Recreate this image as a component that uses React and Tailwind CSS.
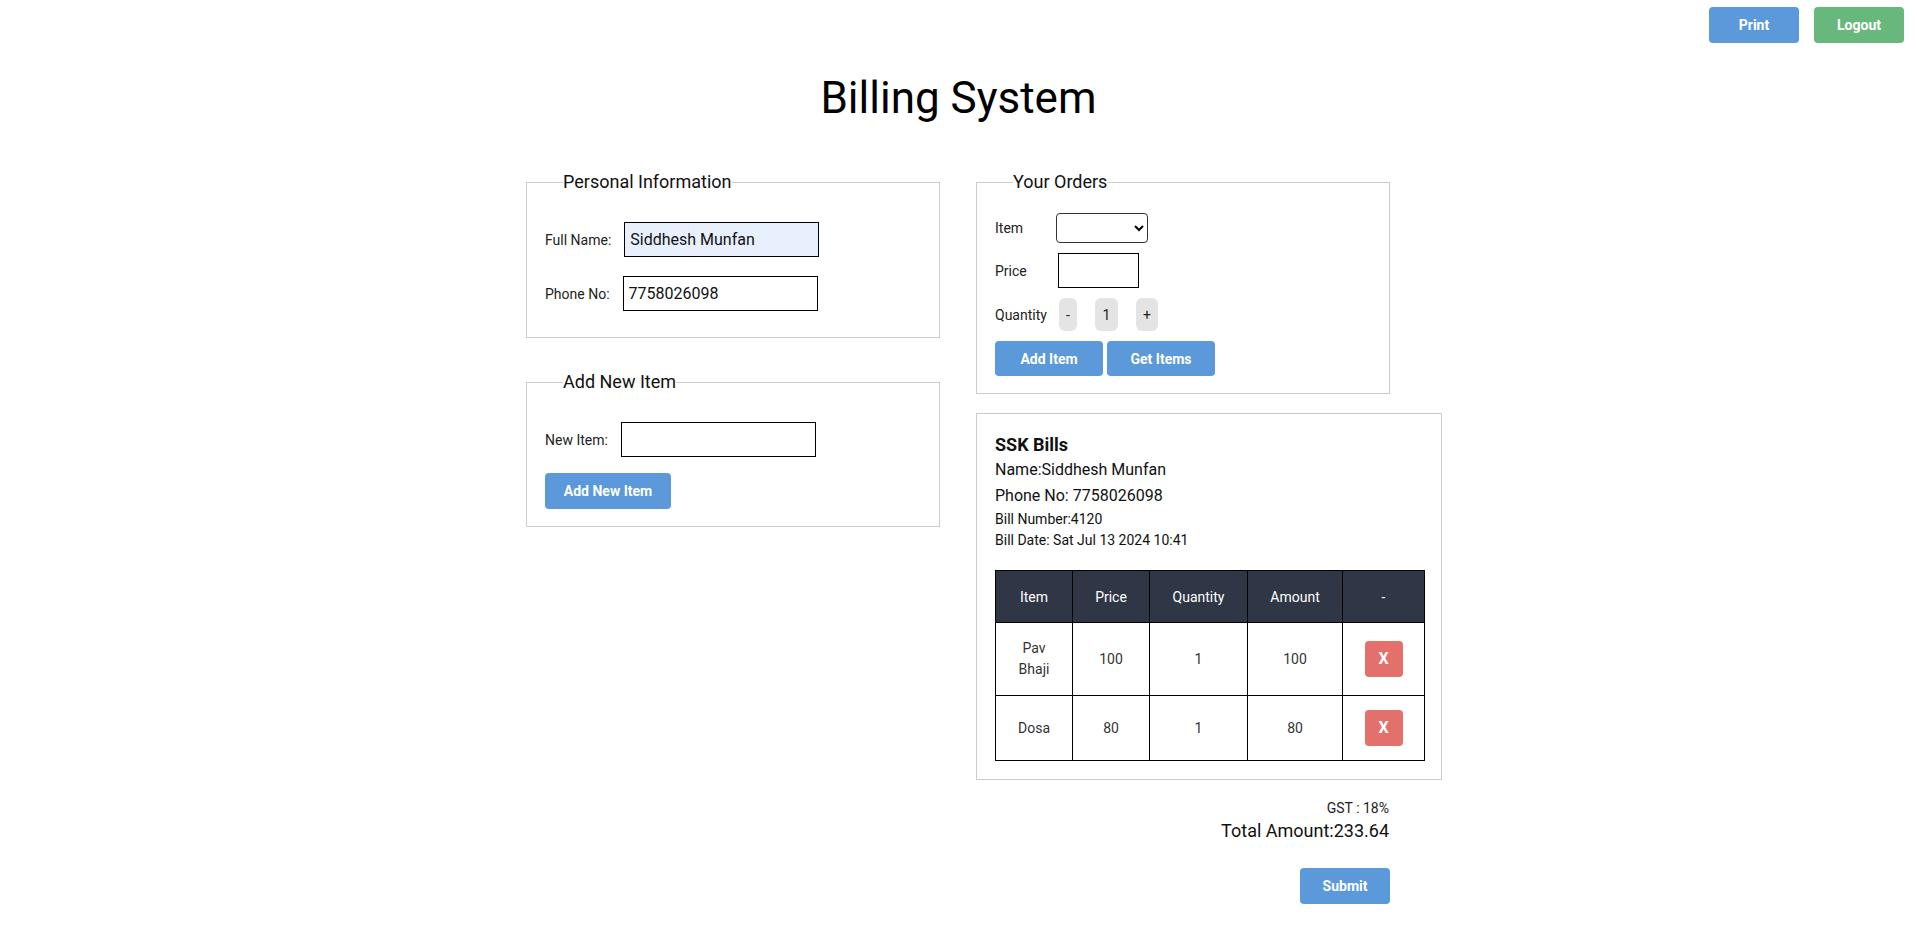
import React from "react";

const rows = [
  { item: "Pav Bhaji", price: 100, qty: 1, amount: 100 },
  { item: "Dosa", price: 80, qty: 1, amount: 80 },
];

function Fieldset({ title, className = "", children }) {
  return (
    <fieldset className={`border border-[#cccccc] px-[18px] ${className}`}>
      <legend className="ml-[18px] p-0 text-[18px] leading-[22px] text-[#111]">{title}</legend>
      {children}
    </fieldset>
  );
}

function TextField({ label, value, autofill }) {
  return (
    <div className="flex items-center gap-[13px]">
      <label className="text-sm text-[#222]">{label}</label>
      <input
        type="text"
        defaultValue={value}
        className={`h-[35px] w-[195px] border border-black px-[5px] text-base text-[#111] outline-none ${
          autofill ? "bg-[#e8f0fe]" : "bg-white"
        }`}
      />
    </div>
  );
}

export default function App() {
  return (
    <div className="min-h-screen bg-white font-['Roboto','Liberation_Sans',sans-serif] text-black">
      <div className="flex justify-end gap-[15px] pr-[13px] pt-[7px]">
        <button className="h-[36px] w-[90px] rounded-[4px] bg-[#5b99db] text-sm font-bold text-white">Print</button>
        <button className="h-[36px] w-[90px] rounded-[4px] bg-[#68b77d] text-sm font-bold text-white">Logout</button>
      </div>

      <h1 className="mt-[29px] text-center text-[44px] font-normal leading-[52px]">Billing System</h1>

      <div className="mt-[47px] flex justify-center gap-[36px] pr-px">
        {/* left column */}
        <div className="flex w-[414px] flex-col">
          <Fieldset title="Personal Information" className="pb-[26px] pt-[29px]">
            <div className="flex flex-col gap-[19px]">
              <TextField label="Full Name:" value="Siddhesh Munfan" autofill />
              <TextField label="Phone No:" value="7758026098" />
            </div>
          </Fieldset>

          <Fieldset title="Add New Item" className="mt-[33px] pb-[17px] pt-[29px]">
            <TextField label="New Item:" value="" />
            <button className="mt-[16px] h-[36px] w-[126px] rounded-[4px] bg-[#5b99db] text-sm font-bold text-white">
              Add New Item
            </button>
          </Fieldset>
        </div>

        {/* right column */}
        <div className="flex w-[414px] flex-col">
          <Fieldset title="Your Orders" className="pb-[17px] pt-[20px]">
            <div className="flex flex-col gap-[10px]">
              <div className="flex items-center">
                <label className="w-[61px] text-sm text-[#222]">Item</label>
                <select className="h-[30px] w-[92px] rounded-[4px] border border-[#333] bg-white text-sm">
                  <option value=""></option>
                  <option>Pav Bhaji</option>
                  <option>Dosa</option>
                </select>
              </div>
              <div className="flex items-center">
                <label className="w-[63px] text-sm text-[#222]">Price</label>
                <input type="text" className="h-[35px] w-[81px] border border-black bg-white px-[5px] outline-none" />
              </div>
              <div className="flex items-center">
                <label className="w-[64px] text-sm text-[#222]">Quantity</label>
                <div className="flex items-center gap-[18px]">
                  <button className="h-[33px] w-[18px] rounded-[6px] bg-[#e4e4e4] text-sm text-[#222]">-</button>
                  <span className="flex h-[33px] w-[23px] items-center justify-center rounded-[6px] bg-[#e4e4e4] text-sm text-[#222]">
                    1
                  </span>
                  <button className="h-[33px] w-[22px] rounded-[6px] bg-[#e4e4e4] text-sm text-[#222]">+</button>
                </div>
              </div>
              <div className="flex gap-[4px]">
                <button className="h-[35px] w-[108px] rounded-[4px] bg-[#5b99db] text-sm font-bold text-white">Add Item</button>
                <button className="h-[35px] w-[108px] rounded-[4px] bg-[#5b99db] text-sm font-bold text-white">Get Items</button>
              </div>
            </div>
          </Fieldset>

          <div className="mt-[19px] w-[466px] border border-[#cccccc] p-[18px]">
            <h3 className="text-[18px] font-bold leading-[25px] text-[#111]">SSK Bills</h3>
            <p className="text-base leading-[26px] text-[#111]">Name:Siddhesh Munfan</p>
            <p className="text-base leading-[26px] text-[#111]">Phone No: 7758026098</p>
            <p className="text-sm leading-[21px] text-[#111]">Bill Number:4120</p>
            <p className="text-sm leading-[21px] text-[#111]">Bill Date: Sat Jul 13 2024 10:41</p>

            <table className="mt-[19px] w-[429px] table-fixed border-collapse text-center text-sm">
              <colgroup>
                <col className="w-[77px]" />
                <col className="w-[77px]" />
                <col className="w-[98px]" />
                <col className="w-[95px]" />
                <col className="w-[82px]" />
              </colgroup>
              <thead>
                <tr className="bg-[#2f3645] text-white">
                  <th className="h-[52px] border border-black px-[15px] font-normal">Item</th>
                  <th className="border border-black px-[15px] font-normal">Price</th>
                  <th className="border border-black px-[15px] font-normal">Quantity</th>
                  <th className="border border-black px-[15px] font-normal">Amount</th>
                  <th className="border border-black px-[15px] font-normal">-</th>
                </tr>
              </thead>
              <tbody className="text-[#333]">
                {rows.map((r) => (
                  <tr key={r.item}>
                    <td className="border border-black px-[15px] py-[15px] leading-[21px]">{r.item}</td>
                    <td className="border border-black px-[15px]">{r.price}</td>
                    <td className="border border-black px-[15px]">{r.qty}</td>
                    <td className="border border-black px-[15px]">{r.amount}</td>
                    <td className="border border-black px-[15px] py-[14px]">
                      <button className="h-[36px] w-[38px] rounded-[4px] bg-[#e4706c] text-base font-bold text-white">X</button>
                    </td>
                  </tr>
                ))}
              </tbody>
            </table>
          </div>

          <p className="mt-[18px] pr-px text-right text-sm leading-[20px] text-[#222]">GST : 18%</p>
          <p className="pr-px text-right text-[18px] leading-[26px] text-[#111]">Total Amount:233.64</p>
          <button className="mt-[24px] h-[36px] w-[90px] self-end rounded-[4px] bg-[#5b99db] text-sm font-bold text-white">
            Submit
          </button>
        </div>
      </div>
    </div>
  );
}
